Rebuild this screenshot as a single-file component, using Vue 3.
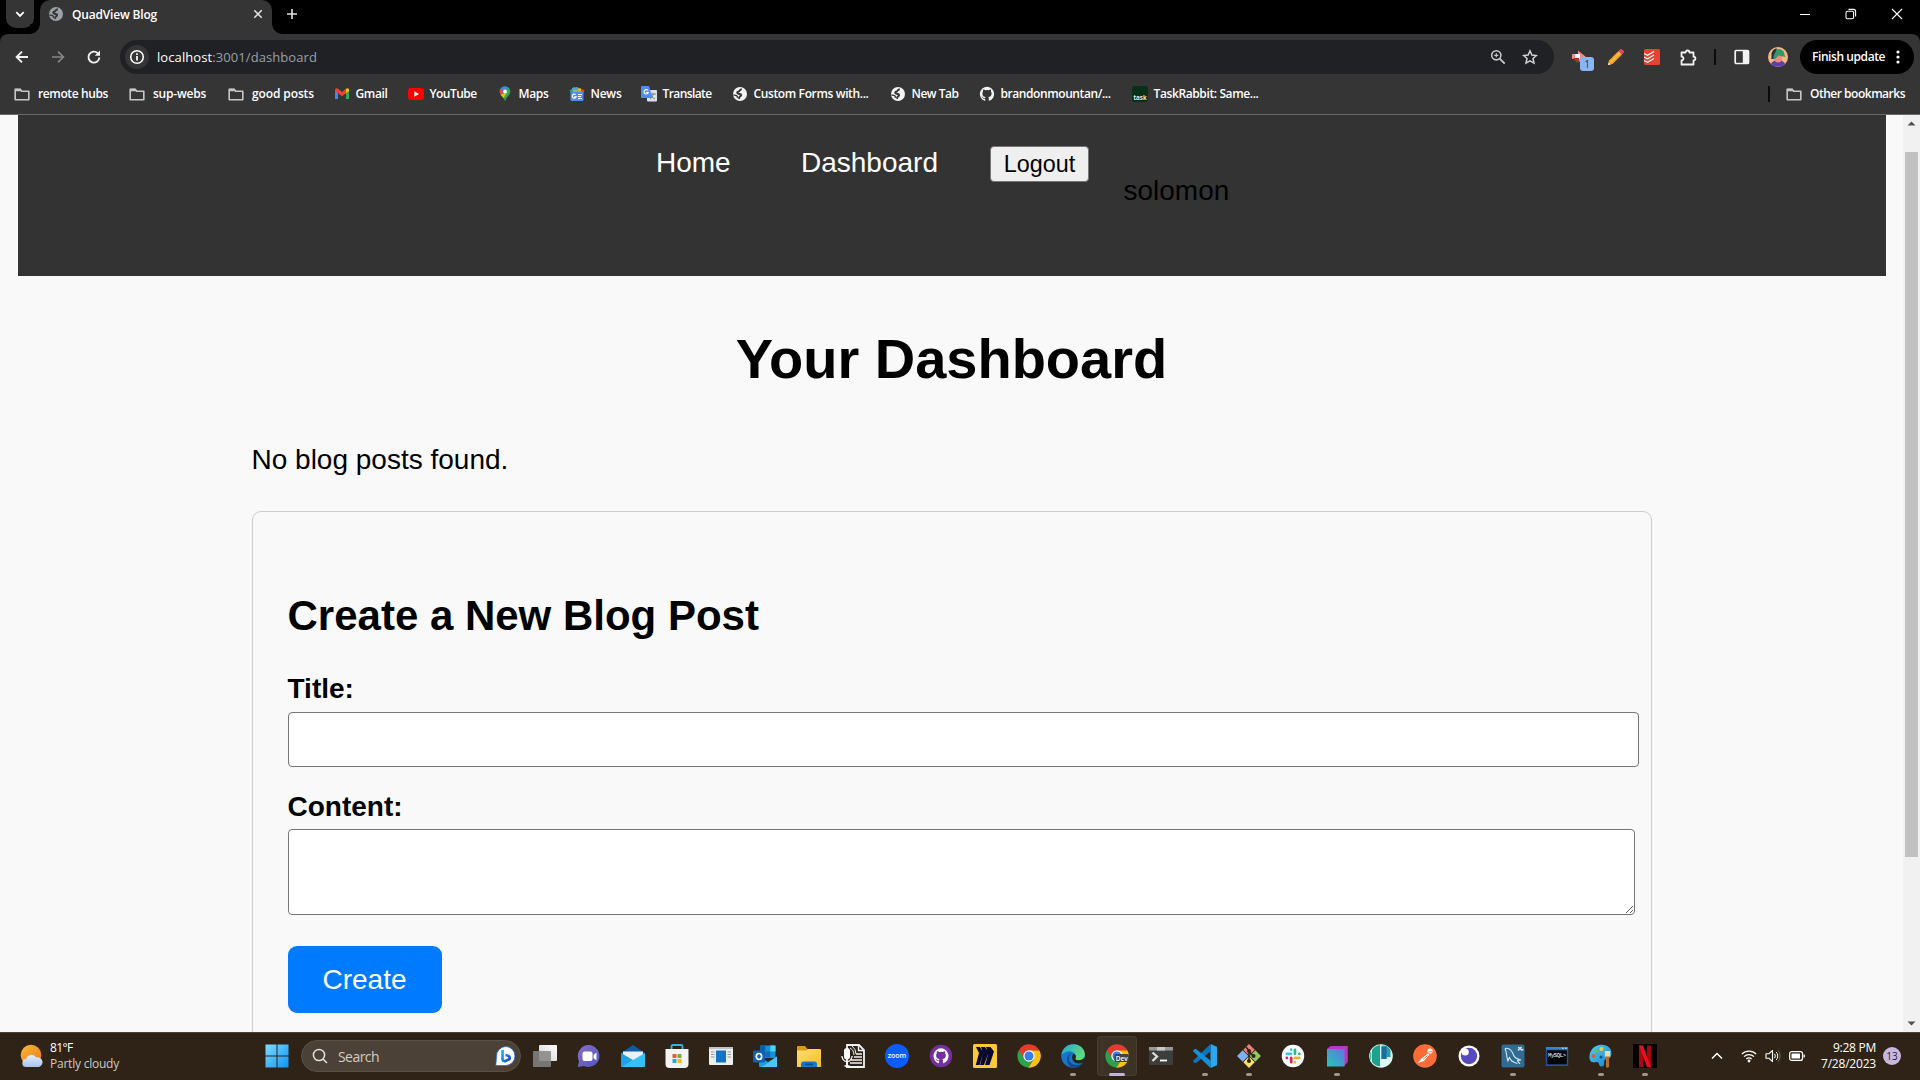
<script setup>
const FOLDER = '<path d="M1.2 12.6V3.2h5l1.5 2h7.1v8.6H1.2z" fill="none" stroke="#c7c7c7" stroke-width="1.6" stroke-linejoin="round"/><path d="M1 2.8h5.4l1.5 2.4H1z" fill="#c7c7c7"/>'
const globe = (color, ink) =>
  `<circle cx="8" cy="8" r="7" fill="${color}"/><path d="M9.800 3.200C7.500 3.200 8 5.300 6 5.800 4.600 6.300 5.200 8 7.600 8c2.200 0 1.700 1.800.6 2.300-.9.300-.8 1.200-1.500 2.400" fill="none" stroke="${ink}" stroke-width="2"/><path d="M1.400 8.800l3.200.8q1.300.6.500 2.400" fill="none" stroke="${ink}" stroke-width="1.300"/>`
const CAT = 'M8 .8a7.200 7.200 0 0 0-2.300 14c.4.100.5-.2.500-.4v-1.500c-2 .4-2.400-.8-2.400-.8-.3-.8-.8-1-.8-1-.7-.5 0-.5 0-.5.7 0 1.100.8 1.100.8.700 1.100 1.700.8 2.100.6 0-.5.3-.8.500-1-1.600-.2-3.300-.8-3.300-3.600 0-.8.300-1.400.7-1.900 0-.2-.3-.9.1-1.900 0 0 .6-.2 2 .7a7 7 0 0 1 3.600 0c1.400-.9 2-.7 2-.7.4 1 .1 1.700.1 1.900.4.500.7 1.100.7 1.900 0 2.800-1.700 3.400-3.300 3.600.3.200.5.700.5 1.300v2.100c0 .2.100.5.500.4A7.200 7.200 0 0 0 8 .8z'

const bookmarks = [
  { label: 'remote hubs', text: 70, step: 115, folder: true, icon: FOLDER },
  { label: 'sup-webs', text: 53, step: 99, folder: true, icon: FOLDER },
  { label: 'good posts', text: 62, step: 106, folder: true, icon: FOLDER },
  { label: 'Gmail', text: 32, step: 74, icon: '<path d="M1 3.500V13h3V7z" fill="#4285f4"/><path d="M15 3.500V13h-3V7z" fill="#34a853"/><path d="M1 3.800C1 2 3 1.800 4 2.800l4 3.200 4-3.200v4.400l-4 3-4-3L1 5z" fill="#ea4335"/><path d="M12 2.800c1-1 3-.8 3 1L15 5l-3 2.200z" fill="#fbbc04"/>' },
  { label: 'YouTube', text: 47, step: 89, icon: '<rect y="2" width="16" height="12" rx="3" fill="#f00"/><path d="M6.300 5.300 11 8l-4.700 2.700z" fill="#fff"/>' },
  { label: 'Maps', text: 30, step: 72, icon: '<path d="M8 .5a5 5 0 0 0-5.300 5c0 4 4 5 5.300 10 1.300-5 5.300-6 5.300-10A5 5 0 0 0 8 .5z" fill="#34a853"/><path d="M3.500 2.800A5.300 5.300 0 0 1 11 1.400L6 8z" fill="#4285f4"/><path d="m3.500 2.800 3 2.500-3 3.500C2.400 6.500 2.300 4.500 3.500 2.800z" fill="#ea4335"/><path d="M3.500 8.800 9.500 7 6.600 12z" fill="#fbbc04"/><circle cx="8" cy="5.500" r="1.900" fill="#fff"/>' },
  { label: 'News', text: 31, step: 72, icon: '<path d="m.5 4 6-1.500 1 5H2z" fill="#34a853"/><path d="m9 2.500 6.500 1.500L14 8H8z" fill="#ea4335"/><path d="m4 1.500 8 1V6H4z" fill="#fbbc04"/><path d="m3 2 6-1 .5 3.500H3z" fill="#4aa8d8"/><rect x="1.500" y="5.500" width="13" height="9.500" rx="1" fill="#4f8df5"/><path d="M6.700 8.700a2 2 0 1 0 .5 2H5.200M9 8.500h4M9 10.500h3M9 12.500h4" stroke="#fff" fill="none" stroke-width="1.100"/>' },
  { label: 'Translate', text: 49, step: 91, icon: '<rect x="6" y="4" width="10" height="11.500" rx="1" fill="#dfe1e5"/><path d="M9 8h6M12 7v1c0 2-1 4-3 5M10.500 9c.5 2 2 3.500 3.500 4" stroke="#7a8290" fill="none"/><path d="M1 0h7l3.500 12H1a1 1 0 0 1-1-1V1a1 1 0 0 1 1-1z" fill="#4f8df5"/><path d="M7 4.500A2.200 2.200 0 1 0 7.300 6.500H5" stroke="#fff" fill="none" stroke-width="1.100"/>' },
  { label: 'Custom Forms with...', text: 115, step: 158, icon: globe('#f4f4f4', '#353535') },
  { label: 'New Tab', text: 47, step: 89, icon: globe('#f4f4f4', '#353535') },
  { label: 'brandonmountan/...', text: 110, step: 153, icon: `<path d="${CAT}" fill="#f4f4f4"/>` },
  { label: 'TaskRabbit: Same...', text: 105, step: 130, icon: '<rect width="16" height="16" rx="2" fill="#0b3019"/><text x="8" y="13.500" text-anchor="middle" fill="#fff" font-size="6.500" font-family="Open Sans, sans-serif" font-weight="600">task</text>' },
]

const CHROME = '<path d="M12 12 2 6.100a11.700 11.700 0 0 0 9.300 17.600L17 15z" fill="#2ba24c"/><path d="M12 6.300h10.300A11.700 11.700 0 0 1 11.300 23.700L17 14.800z" fill="#fbc116"/><path d="M2 6.100A11.700 11.700 0 0 1 22.300 6.300H12L7 14.800z" fill="#e33b2e"/><circle cx="12" cy="12" r="5.700" fill="#fff"/><circle cx="12" cy="12" r="4.500" fill="#347df0"/>'

const apps = [
  { name: 'Task view', icon: '<rect x="6" y="1" width="18" height="16" rx="1" fill="url(#gWhite)"/><rect x="0" y="7" width="18" height="16" rx="1" fill="#858585" opacity=".85"/>' },
  { name: 'Chat', icon: '<path d="M12.500 1A11 11 0 1 1 7 22L.8 23 2 17A11 11 0 0 1 12.500 1z" fill="url(#gChat)"/><rect x="5.500" y="7.500" width="10" height="9.500" rx="2" fill="#fff"/><path d="m16.500 11 3-2.500v8l-3-2.500z" fill="#fff"/>' },
  { name: 'Mail', icon: '<path d="m0 9 12-8 12 8v4H0z" fill="#105aa8"/><path d="M2 7.500h20v9H2z" fill="#e9f2fa"/><path d="m0 9 24 14H1a1 1 0 0 1-1-1z" fill="#1ea0e6"/><path d="M24 9 0 23h23a1 1 0 0 0 1-1z" fill="#35c0f5"/>' },
  { name: 'Store', icon: '<path d="M6.500 6V2.500Q6.500 1 8 1h8q1.500 0 1.500 1.500V6" fill="none" stroke="#31b2e8" stroke-width="1.900"/><path d="M.5 5h23v15a4 4 0 0 1-4 4h-15a4 4 0 0 1-4-4z" fill="#f3f3f3"/><path d="M7.500 10h4v4h-4z" fill="#e85c2c"/><path d="M12.500 10h4v4h-4z" fill="#70b23a"/><path d="M7.500 15h4v4h-4z" fill="#2aa3df"/><path d="M12.500 15h4v4h-4z" fill="#f6b626"/>' },
  { name: 'News reader', icon: '<rect y="3" width="24" height="18" rx="1" fill="#eee"/><path d="M0 3h24v2H0z" fill="#bfc4c8"/><rect x="7" y="6.500" width="10" height="12" fill="#1273c9"/><path d="M2 8h3.500M2 10.500h3.500M2 13h3.500M18.500 8H22M18.500 10.500H22M18.500 13H22" stroke="#999"/>' },
  { name: 'Outlook', icon: '<path d="M7 1.500h15.500V14H7z" fill="#1490df"/><path d="M7 1.500h5.200v6H7z" fill="#0f5ea8"/><path d="M17.300 1.500h5.200v6h-5.200z" fill="#4fd0ff"/><path d="M12.200 7.500h5v6h-5z" fill="#0a6cc0"/><path d="M6 12.500 15 18l9-5.500V23H7a1 1 0 0 1-1-1z" fill="#1b9de2"/><path d="M24 12.500 9 23h15z" fill="#50c5f5"/><rect y="6.500" width="12" height="12" rx="1.200" fill="#0f5fb4"/><ellipse cx="6" cy="12.500" rx="2.700" ry="3" fill="none" stroke="#fff" stroke-width="1.700"/>' },
  { name: 'Explorer', icon: '<path d="M0 3a1 1 0 0 1 1-1h7l2.500 3H23v5H0z" fill="#dc9a12"/><path d="M0 6.500h9l2-1.500h12a1 1 0 0 1 1 1V23H0z" fill="url(#gFolder)"/><path d="M4 23v-3q0-2.500 2.500-2.500h11Q20 17.500 20 20v3z" fill="#1679c7"/><rect x="8" y="19.500" width="8" height="1.800" rx=".9" fill="#0b4a86"/>' },
  { name: 'Dictation', icon: '<path d="M6 1h12l5 5v17H6z" fill="#2b2318" stroke="#f1f1f1" stroke-width="1.800"/><path d="M17.500 1v5.500H23M15 10h6M13 13h8M10 16h11M9 19h12" stroke="#f1f1f1" stroke-width="1.400" fill="none"/><path d="M9 4a8 8 0 0 1 4 7M11 2a10 10 0 0 1 4 8" stroke="#f1f1f1" fill="none"/><rect x="3" y="4" width="6" height="11.500" rx="3" fill="#fff"/><path d="M.8 12q1 5.500 5.200 5.500t5.200-5.500M6 17.500V22M3.500 22h5" stroke="#fff" stroke-width="1.300" fill="none"/>' },
  { name: 'Zoom', icon: '<circle cx="12" cy="12" r="12" fill="#0b5cff"/><text x="12" y="14.200" text-anchor="middle" font-size="7" font-weight="600" font-family="Open Sans, sans-serif" fill="#fff">zoom</text>' },
  { name: 'GitHub Desktop', icon: `<circle cx="12" cy="12" r="11.200" fill="#762fa0"/><g transform="translate(3.500 3.500) scale(1.060)"><path d="${CAT}" fill="#fff"/></g>` },
  { name: 'Miro', icon: '<rect width="24" height="24" rx="1.500" fill="#fcca37"/><path d="M3 3h4l2.200 4L8 3h4l2.200 3.600L13 3h4.500L21 7.500 16.500 21H12l3.500-12L11 21H7l3-11.500L6.500 21H2.800L6 9z" fill="#080833"/>' },
  { name: 'Chrome', icon: CHROME },
  { name: 'Edge', mark: 'dot', icon: '<circle cx="12" cy="12" r="11.800" fill="#1477ca"/><path d="M.5 10.500C2 3 8 0 13 .2 20 .6 24.500 6 23.800 11.300c-.5 3.700-4 5.300-7.300 4.900-2.300-.3-2.700-1.200-1.700-2.700C16 9 9 5.500 4 8.300 2 9.300 1 10.600.5 10.500z" fill="url(#gEdge)"/><path d="M10 9.500C7 12 7 18 12 20.300c3.400 1.500 7.500.6 10.300-2.100C18 26 9.500 24.500 7 20c-2.400-4.200-1-9.500 3-10.500z" fill="#114b91"/><path d="M14.800 13.500c-1 1.500-.6 2.400 1.700 2.700 3.300.4 6-.8 7-3 .5 2-.1 4-1.200 5-3.500 2.300-8.300 1.500-10.300-1.700-1.500-2.500-.7-5.500.4-6.700 1.600.3 3 2 2.400 3.700z" fill="#2b2318"/>' },
  { name: 'Chrome Dev', mark: 'active', icon: CHROME + '<rect x="9.500" y="10" width="14.500" height="8" rx="1.500" fill="#434343"/><text x="16.800" y="16.500" text-anchor="middle" font-size="6.500" font-weight="600" font-family="Open Sans, sans-serif" fill="#fff">Dev</text>' },
  { name: 'Terminal', icon: '<rect y="3" width="24" height="18" rx="1" fill="#3d3d3d"/><path d="M0 3h24v3.500H0z" fill="#999"/><path d="M8 3h8v3.500H8z" fill="#c9c9c9"/><path d="m3.500 8.500 4.500 4-4.500 4.500" stroke="#ddd" stroke-width="2.300" fill="none"/><path d="M11 16.500h7" stroke="#fff" stroke-width="1.800"/>' },
  { name: 'VS Code', mark: 'dot', icon: '<path d="M17.500 0 24 2.800v18.400L17.500 24z" fill="#29a8ee"/><path d="M17.500 0 18 7 3 19l-1.300.1L.2 17.600q-.4-.5.1-1z" fill="#0b75bd"/><path d="m17.500 24 .5-7L3 5l-1.300-.1L.2 6.400q-.4.500.1 1z" fill="#158fd6"/>' },
  { name: 'Git Bash', mark: 'dot', icon: '<path d="m12 0 5.700 5.700L12 11.400 6.300 5.700z" fill="#f37e72"/><path d="m5.700 6.300 5.700 5.700-5.700 5.700L0 12z" fill="#7fb0ef"/><path d="m18.300 6.300L24 12l-5.700 5.700-5.700-5.700z" fill="#8fca60"/><path d="m12 12.600 5.700 5.700L12 24l-5.700-5.700z" fill="#fbdf6c"/><path d="m9 3 3 3.500V17M12 7.500l4.500 4.500" stroke="#2d241a" stroke-width="1.500" fill="none"/><circle cx="12" cy="7" r="2" fill="#2d241a"/><circle cx="12" cy="17" r="2" fill="#2d241a"/><circle cx="16.500" cy="12" r="2" fill="#2d241a"/>' },
  { name: 'Slack', icon: '<circle cx="12" cy="12" r="11.200" fill="#fff"/><g stroke-width="2.700" stroke-linecap="round"><path d="M10.200 9.800H5.800M10.200 5.600v.2" stroke="#36c5f0"/><path d="M14 5.800v4M18.300 9.800h.1" stroke="#2eb67d"/><path d="M14 13.900h4.300M14 18.200v.1" stroke="#ecb22e"/><path d="M10.200 13.900v4.300M5.800 13.900h.1" stroke="#e01e5a"/></g>' },
  { name: 'Cube', mark: 'dot', icon: '<path d="M2 5 6 2h16.500v16L19 22V5z" fill="#e8348f"/><path d="M2 5h17.500v16L22.500 18V2H6z" fill="#b837c7"/><rect x="2" y="5" width="17.500" height="17.500" fill="url(#gCube)"/>' },
  { name: 'Panels', icon: '<circle cx="12" cy="12" r="11.800" fill="#dcf6f5"/><path d="M3 6q3-4.500 8-5v21.500q-5-.4-8-4.500z" fill="#1da38d"/><path d="M12.500 1.500h5l4 4.500v7h-4v2h-5z" fill="#2a9dad"/><path d="M12.500 3h5v12h-5z" fill="#1b6d9c"/><path d="M1.200 8h1v8h-1z" fill="#26b29b"/>' },
  { name: 'Postman', icon: '<circle cx="12" cy="12" r="11.800" fill="#ff6c37"/><path d="m4.500 19 3.800-4.200 6.700-5.500 1.500 1.500-6 6.500z" fill="#fff"/><circle cx="17" cy="7" r="2.600" fill="#fff"/><path d="m15.500 8.200 3.200-.7" stroke="#ff6c37" stroke-width=".9"/><path d="m10 15.500 4.500-4" stroke="#ff6c37" stroke-width=".8"/>' },
  { name: 'Insomnia', icon: '<circle cx="12" cy="12" r="10.500" fill="#fff"/><circle cx="12" cy="12" r="8.200" fill="#5849be"/><circle cx="8.200" cy="8" r="3.600" fill="#fff"/>' },
  { name: 'Workbench', mark: 'dot', icon: '<rect x=".5" y=".5" width="23" height="23" rx="2" fill="#2f6b92"/><path d="M4 4.500c4-1 7 2.500 8.500 6.500 1 3 3.500 4 7.500 5-2 0-3 .2-3.500.7L19 20M4 4.500c1 2 1 3 1.500 5.500s.5 5 1.500 7.500c0-2 .5-3 1.500-4 1 3 4 5 8 6" fill="none" stroke="#d8e8f2" stroke-width="1.100"/><path d="m17 6.500 3.500-3.500M17 3.500l2 .5 1.500 2 2-.5" stroke="#d8e8f2" stroke-width="1.400" fill="none"/>' },
  { name: 'MySQL', icon: '<rect x=".8" y="3" width="22.400" height="19" fill="#27529b"/><path d="M1 3h22v2.500H1z" fill="#3c82d4"/><path d="M17 4.200h1.500M20 4.200h1.500" stroke="#fff"/><path d="M2.200 6.300h19.600v14H2.200z" fill="#050505"/><text x="12" y="13.200" text-anchor="middle" font-size="5.600" font-family="Liberation Mono, monospace" fill="#fff" textLength="18">MySQL&gt;</text>' },
  { name: 'Paint', mark: 'dot', icon: '<path d="M12.500.8C19 .8 23 5 22.500 10c-.4 4-3 5-4.500 5-2.500 0-3 2-2.800 4 .3 2.500-1.200 4-3.200 3.500-3-.6-1-5-4.500-4.500C4.500 19 .8 18.500.5 14 0 6 6 .8 12.500.8z" fill="url(#gPaint)"/><circle cx="12.500" cy="5" r="2" fill="#f4cb33"/><circle cx="7.500" cy="7" r="2" fill="#6bbf4b"/><circle cx="4.500" cy="12" r="2" fill="#e35b3a"/><circle cx="12" cy="13" r="1.500" fill="#12558e"/><path d="M17 12h3v11q-1.500 1.500-3 0z" fill="#b86f27"/><path d="M15.800 7h5.400v5.500h-5.400z" fill="#ecd9a8"/>' },
  { name: 'Netflix', mark: 'dot', icon: '<rect width="24" height="24" fill="#050202"/><path d="M6 1.500h4V23l-4 .5z" fill="#a70810"/><path d="M14 1.500h4v22l-4-.5z" fill="#a70810"/><path d="M6 1.500h4l8 22-4-.5z" fill="#e8101c"/>' },
]

// Spreads a label's letters so that it fills the given width in pixels.
const vFit = {
  mounted(el, { value }) {
    const natural = el.getBoundingClientRect().width
    el.style.letterSpacing = `${((value - natural) / el.textContent.length).toFixed(3)}px`
  },
}
</script>

<template>
  <div class="screen">
    <svg class="defs" width="0" height="0">
      <defs>
        <linearGradient id="gWhite" x1="0" y1="1" x2="1" y2="0"><stop offset="0" stop-color="#cfcfcf" /><stop offset="1" stop-color="#fff" /></linearGradient>
        <linearGradient id="gChat" x1="0" y1="0" x2="1" y2="1"><stop offset="0" stop-color="#8a6fc8" /><stop offset="1" stop-color="#4d55bd" /></linearGradient>
        <linearGradient id="gFolder" x1="0" y1="0" x2="1" y2="1"><stop offset="0" stop-color="#ffdd70" /><stop offset="1" stop-color="#f7bd2b" /></linearGradient>
        <linearGradient id="gEdge" x1="0" y1="0" x2="1" y2=".5"><stop offset="0" stop-color="#25a4e0" /><stop offset="1" stop-color="#5fdd74" /></linearGradient>
        <linearGradient id="gCube" x1="1" y1="0" x2="0" y2="1"><stop offset="0" stop-color="#5a78e0" /><stop offset="1" stop-color="#27c6b4" /></linearGradient>
        <linearGradient id="gPaint" x1="0" y1="0" x2="1" y2="1"><stop offset="0" stop-color="#53cdf5" /><stop offset="1" stop-color="#1681cf" /></linearGradient>
        <linearGradient id="gWin" x1="0" y1="0" x2="1" y2="1"><stop offset="0" stop-color="#7fdcff" /><stop offset="1" stop-color="#0b93f5" /></linearGradient>
        <linearGradient id="gSun" x1="0" y1="0" x2="1" y2="1"><stop offset="0" stop-color="#f9b934" /><stop offset="1" stop-color="#ea7a1d" /></linearGradient>
        <linearGradient id="gCloud" x1="0" y1="0" x2="0" y2="1"><stop offset="0" stop-color="#e6effd" /><stop offset="1" stop-color="#a9c2ee" /></linearGradient>
        <linearGradient id="gBing" x1="0" y1="0" x2="1" y2="1"><stop offset="0" stop-color="#1bb5ea" /><stop offset="1" stop-color="#1746c4" /></linearGradient>
      </defs>
    </svg>

    <header class="tabs">
      <button class="tab-search" aria-label="Search tabs">
        <svg width="12" height="12" viewBox="0 0 12 12"><path d="m2.300 4.200 3.700 3.700 3.700-3.700" fill="none" stroke="#fff" stroke-width="1.800" /></svg>
      </button>
      <div class="tab">
        <svg width="16" height="16" viewBox="0 0 16 16" v-html="globe('#9aa0a6', '#353535')"></svg>
        <span v-fit="85" class="tab-title">QuadView Blog</span>
        <svg class="tab-close" width="10" height="10" viewBox="0 0 10 10"><path d="m1.300 1.300 7.400 7.400M8.700 1.300 1.300 8.700" stroke="#e6e6e6" stroke-width="1.500" /></svg>
      </div>
      <svg class="new-tab" width="12" height="12" viewBox="0 0 12 12"><path d="M6 1v10M1 6h10" stroke="#e6e6e6" stroke-width="1.600" /></svg>
      <div class="window-controls">
        <svg width="12" height="12" viewBox="0 0 12 12"><path d="M1 6.500h10" stroke="#fff" /></svg>
        <svg width="12" height="12" viewBox="0 0 12 12"><rect x="1" y="3.200" width="7.600" height="7.600" rx="1.500" fill="none" stroke="#fff" stroke-width="1.100" /><path d="M3.500 1.400H8.500Q10.600 1.400 10.600 3.500V8.500" fill="none" stroke="#fff" stroke-width="1.100" /></svg>
        <svg width="12" height="12" viewBox="0 0 12 12"><path d="m1 1 10 10M11 1 1 11" stroke="#fff" stroke-width="1.100" /></svg>
      </div>
    </header>

    <div class="toolbar">
      <svg class="nav-icon" width="16" height="16" viewBox="0 0 16 16"><path d="M14 8H2.800M8 2.600 2.600 8 8 13.400" fill="none" stroke="#f2f2f2" stroke-width="1.900" /></svg>
      <svg class="nav-icon" width="16" height="16" viewBox="0 0 16 16"><path d="M2 8h11.200M8 2.600 13.400 8 8 13.400" fill="none" stroke="#868686" stroke-width="1.700" /></svg>
      <svg class="nav-icon" width="16" height="16" viewBox="0 0 16 16"><path d="M13.400 8.500A5.500 5.500 0 1 1 11.900 4.300L13 5.400" fill="none" stroke="#f2f2f2" stroke-width="1.900" /><path d="M14 1.500v5.200H8.800z" fill="#f2f2f2" /></svg>
      <div class="omnibox">
        <span class="site-info"><svg width="16" height="16" viewBox="0 0 16 16"><circle cx="8" cy="8" r="6.300" fill="none" stroke="#fff" stroke-width="1.600" /><path d="M8 7v4.500M8 4.200v1.700" stroke="#fff" stroke-width="1.700" /></svg></span>
        <span v-fit="160" class="url"><b>localhost</b>:3001/dashboard</span>
        <span class="grow"></span>
        <svg class="magnify" width="16" height="16" viewBox="0 0 16 16"><circle cx="6.300" cy="6.300" r="4.600" fill="none" stroke="#c4c7ca" stroke-width="1.600" /><path d="m9.700 9.700 5 5" stroke="#c4c7ca" stroke-width="1.900" /><path d="M6.300 4.300v4M4.300 6.300h4" stroke="#c4c7ca" stroke-width="1.200" /></svg>
        <svg width="16" height="16" viewBox="0 0 16 16"><path d="m8 1.800 1.900 4.200 4.500.5-3.400 3 1 4.600L8 11.800l-4 2.300 1-4.600-3.400-3L6.100 6z" fill="none" stroke="#d0d2d4" stroke-width="1.500" /></svg>
      </div>
      <div class="extensions">
        <div class="ext-badge">
          <svg width="18" height="16" viewBox="0 0 18 16"><path d="M1 5h6V1.500L15 8l-8 5.500V10H1z" fill="#ee8c88" /><path d="M4 5h5v5H4z" fill="#fff" /><path d="M2 9h6v4H5z" fill="#b0302c" /></svg>
          <span class="count">1</span>
        </div>
        <svg class="pencil" width="16" height="16" viewBox="0 0 16 16"><path d="m0 16 1-4.500L10.500 2 14 5.500 4.500 15z" fill="#f9a21c" /><path d="M2.800 13.300 12.300 3.800" stroke="#ffc043" stroke-width="1.500" /><path d="m10.500 2 1.500-1.500a1.500 1.500 0 0 1 2.200 0l1.300 1.300a1.500 1.500 0 0 1 0 2.200L14 5.500z" fill="#e8416a" /><path d="m0 16 .6-2.600 2 2z" fill="#fff3d6" /></svg>
        <svg class="todo" width="16" height="16" viewBox="0 0 16 16"><rect width="16" height="16" rx="1.500" fill="#e44332" /><path d="M0 4.500l3.500 1.800L10 2.500M0 8l3.500 1.800L10 6M0 11.500l3.500 1.800L10 9.500" fill="none" stroke="#fff" stroke-width="1.200" /></svg>
        <svg class="puzzle" width="17" height="17" viewBox="0 0 17 17"><path d="M1.500 3.500h4a2 2 0 0 1 4 0h4v4.200a1.900 1.900 0 0 1 0 3.800v4H1.500v-4a2 2 0 0 0 0-4z" fill="none" stroke="#f2f2f2" stroke-width="1.800" stroke-linejoin="round" /></svg>
        <i class="divider"></i>
        <svg class="side" width="16" height="16" viewBox="0 0 16 16"><rect x="1.200" y="1.500" width="13.300" height="13" rx="1" fill="none" stroke="#f2f2f2" stroke-width="1.700" /><path d="M8.800 2h5.500v12H8.800z" fill="#f2f2f2" /></svg>
        <svg class="side" width="20" height="20" viewBox="0 0 20 20"><circle cx="10" cy="10" r="10" fill="#f5b784" /><path d="M3 17q2-4 7-4t7 4a10 10 0 0 1-14 0z" fill="#5b3fb0" /><path d="M6 8h8v4.500q-1 3-4 3t-4-3.500z" fill="#f08a7c" /><path d="M4.500 9q0-7 6-7 6 .5 6 6l1 2-7-1.500-3.500 3.500H5z" fill="#2c9b68" /><path d="M3.500 6.500Q5 1.500 9 1.500L5.500 9v3h-2z" fill="#24303c" /></svg>
      </div>
      <button class="update"><span v-fit="73">Finish update</span><svg width="4" height="14" viewBox="0 0 4 14"><circle cx="2" cy="2" r="1.600" fill="#fff" /><circle cx="2" cy="7" r="1.600" fill="#fff" /><circle cx="2" cy="12" r="1.600" fill="#fff" /></svg></button>
    </div>

    <div class="bookmarks">
      <div v-for="b in bookmarks" :key="b.label" class="bookmark" :class="{ folder: b.folder }" :style="{ width: b.step + 'px' }">
        <svg width="16" height="16" viewBox="0 0 16 16" v-html="b.icon"></svg>
        <span v-fit="b.text">{{ b.label }}</span>
      </div>
      <i class="divider"></i>
      <div class="bookmark folder">
        <svg width="16" height="16" viewBox="0 0 16 16" v-html="FOLDER"></svg>
        <span v-fit="95">Other bookmarks</span>
      </div>
    </div>

    <div class="viewport">
      <main class="page">
        <nav class="site-nav">
          <a class="home">Home</a>
          <a class="dash">Dashboard</a>
          <button class="logout">Logout</button>
          <span class="user">solomon</span>
        </nav>
        <h1>Your Dashboard</h1>
        <div class="container">
          <p>No blog posts found.</p>
          <form class="post-form" @submit.prevent>
            <h2>Create a New Blog Post</h2>
            <label for="title">Title:</label>
            <input id="title" type="text" />
            <label for="content" class="second">Content:</label>
            <textarea id="content"></textarea>
            <button class="create">Create</button>
          </form>
        </div>
      </main>
      <div class="scrollbar">
        <svg width="17" height="17" viewBox="0 0 17 17"><path d="m4.500 10.500 4-4 4 4z" fill="#505050" /></svg>
        <i class="thumb"></i>
        <span class="grow"></span>
        <svg width="17" height="17" viewBox="0 0 17 17"><path d="m4.500 6.500 4 4 4-4z" fill="#505050" /></svg>
      </div>
    </div>

    <footer class="taskbar">
      <div class="weather">
        <svg width="24" height="24" viewBox="0 0 24 24"><circle cx="11" cy="11" r="10.300" fill="url(#gSun)" /><path d="M6.500 23a4 4 0 0 1-.3-8 5.500 5.500 0 0 1 10-1.500 4.800 4.800 0 0 1 2.800 9.500z" fill="url(#gCloud)" /></svg>
        <div class="lines"><span v-fit="22.5" class="bright">81°F</span><span v-fit="69">Partly cloudy</span></div>
      </div>
      <svg class="start" width="24" height="24" viewBox="0 0 24 24"><path d="M.5.500h11v11H.5zM12.500.5h11v11h-11zM.5 12.500h11v11H.5zM12.500 12.500h11v11h-11z" fill="url(#gWin)" /></svg>
      <div class="search">
        <svg width="16" height="16" viewBox="0 0 16 16"><circle cx="7" cy="7" r="5.600" fill="none" stroke="#e4e0dc" stroke-width="1.500" /><path d="m11 11 4 4" stroke="#e4e0dc" stroke-width="1.600" /></svg>
        <span v-fit="41">Search</span>
        <span class="grow"></span>
        <svg width="20" height="20" viewBox="0 0 20 20"><path d="M10.500.5a9.500 9.500 0 1 1 0 19H.8l.7-9A9.500 9.500 0 0 1 10.500.5z" fill="#fff" stroke="#1b6fd0" stroke-width=".8" /><path d="M7.500 4v9.500q.5 2 2.700 1.600L14.500 13q1.200-3-4-4" fill="none" stroke="url(#gBing)" stroke-width="2.600" stroke-linejoin="round" /></svg>
      </div>
      <div class="apps">
        <div v-for="app in apps" :key="app.name" class="app" :class="app.mark">
          <svg width="24" height="24" viewBox="0 0 24 24" v-html="app.icon"></svg>
        </div>
      </div>
      <span class="grow"></span>
      <div class="tray">
        <svg class="chevron" width="12" height="12" viewBox="0 0 12 12"><path d="m1 8.500 5-5 5 5" fill="none" stroke="#fff" stroke-width="1.500" /></svg>
        <svg width="16" height="14" viewBox="0 0 16 14"><path d="M.8 5.200a10.200 10.200 0 0 1 14.400 0M3 7.700a7 7 0 0 1 10 0M5.300 10a3.800 3.800 0 0 1 5.400 0" fill="none" stroke="#fff" stroke-width="1.200" /><circle cx="8" cy="12" r="1.400" fill="#fff" /></svg>
        <svg class="speaker" width="16" height="14" viewBox="0 0 16 14"><path d="M1 4.800h2.700L7.500 1.500v11L3.700 9.200H1z" fill="none" stroke="#fff" stroke-width="1.100" stroke-linejoin="round" /><path d="M9.500 4.800a3.500 3.500 0 0 1 0 4.400M11.200 3a6 6 0 0 1 0 8" fill="none" stroke="#fff" /><path d="M13 1.200a9 9 0 0 1 0 11.600" fill="none" stroke="#70675c" /></svg>
        <svg class="battery" width="16" height="12" viewBox="0 0 16 12"><rect x=".7" y="1.600" width="12.800" height="8.800" rx="2" fill="none" stroke="#fff" stroke-width="1.200" /><rect x="2.500" y="3.400" width="8.500" height="5.200" rx=".6" fill="#fff" /><path d="M15.200 4.500v3" stroke="#fff" stroke-width="1.300" /></svg>
        <div class="clock"><span v-fit="43">9:28 PM</span><span v-fit="55">7/28/2023</span></div>
        <span class="notice">13</span>
      </div>
    </footer>
  </div>
</template>

<style>
body { margin: 0; overflow: hidden; }
</style>

<style scoped>
.screen { width: 1920px; height: 1080px; display: flex; flex-direction: column; overflow: hidden; background: #000; font-family: "Open Sans", "Noto Sans", sans-serif; font-size: 12px; color: #fff; }
.screen svg { flex: none; display: block; }
.screen span { white-space: nowrap; }
.defs { position: absolute; }
.grow { flex: 1; }
button { margin: 0; font-family: inherit; }

.tabs { height: 34px; flex: none; display: flex; background: #000; align-items: flex-start; }
.tab-search { width: 28px; height: 28px; margin: 0 6px; border: 0; border-radius: 0 0 10px 10px; background: #353535; display: flex; align-items: center; justify-content: center; padding: 0; }
.tab { position: relative; width: 232px; height: 34px; box-sizing: border-box; padding: 0 9px 6px 8px; border-radius: 10px 10px 0 0; background: #353535; display: flex; align-items: center; }
.tab::before, .tab::after { content: ""; position: absolute; bottom: 0; width: 10px; height: 10px; }
.tab::before { left: -10px; background: radial-gradient(circle at 0 0, #000 9.500px, #353535 10px); }
.tab::after { right: -10px; background: radial-gradient(circle at 100% 0, #000 9.500px, #353535 10px); }
.tab-title { margin: 2px 0 0 8px; font-weight: 600; font-size: 12px; line-height: 16px; }
.tab-close { margin-left: auto; }
.new-tab { margin: 8px 0 0 14px; }
.window-controls { margin-left: auto; display: flex; gap: 34px; padding: 8px 17px 0 0; }

.toolbar { height: 46px; flex: none; background: #353535; border-radius: 8px 8px 0 0; display: flex; align-items: center; box-sizing: border-box; padding: 0 6px 0 14px; }
.nav-icon { margin-right: 20px; }
.omnibox { width: 1434px; height: 34px; margin-left: -2px; border-radius: 17px; background: #202124; display: flex; align-items: center; box-sizing: border-box; padding: 0 16px 0 5px; }
.site-info { width: 24px; height: 24px; border-radius: 50%; background: #353535; display: flex; align-items: center; justify-content: center; }
.url { margin-left: 8px; font-size: 13px; color: #9aa0a6; }
.url b { font-weight: 400; color: #fff; }
.magnify { margin-right: 16px; }
.extensions { flex: 1; display: flex; align-items: center; padding-left: 17px; }
.ext-badge { position: relative; }
.pencil { margin-left: 19px; }
.todo, .puzzle { margin-left: 20px; }
.extensions .divider { margin-left: 17px; }
.side { margin-left: 18px; }
.count { position: absolute; left: 9px; top: 8px; width: 14px; height: 14px; border-radius: 3px; background: #8ab4f8; color: #333; font-size: 10px; line-height: 14px; text-align: center; }
.divider { width: 2px; height: 16px; background: #0b0b0b; }
.update { width: 114px; height: 34px; border: 0; border-radius: 17px; background: #000; color: #fff; font-size: 12px; font-weight: 600; line-height: 16px; padding: 0 14px 0 12px; display: flex; align-items: center; justify-content: space-between; }

.bookmarks { height: 34px; flex: none; background: #353535; border-bottom: 1px solid #6a6a6a; display: flex; align-items: center; padding: 0 15px 0 14px; font-weight: 600; }
.bookmark { display: flex; align-items: center; gap: 5.500px; height: 28px; line-height: 16px; margin-bottom: 6px; }
.bookmark span { margin-bottom: 1px; }
.bookmark.folder { gap: 8px; }
.bookmarks .divider { margin: 0 16px 6px auto; }

.viewport { height: 917px; flex: none; display: flex; background: #f9f9f9; color: #000; overflow: hidden; font-family: "Liberation Sans", Arial, sans-serif; font-size: 28px; line-height: 32px; }
.page { width: 1903px; height: 917px; overflow: hidden; }
.site-nav { margin: 0 17px 0 18px; height: 161px; background: #333; display: flex; align-items: flex-start; box-sizing: border-box; padding-left: 638px; }
.site-nav a { color: #fff; margin-top: 32px; }
.home { width: 145px; }
.dash { width: 189px; }
.logout { margin-top: 31px; width: 99px; height: 36px; box-sizing: border-box; padding: 0; border: 1px solid #767676; border-radius: 4px; background: #efefef; color: #000; font-size: 23.330px; line-height: 32px; }
.user { margin: 60px 0 0 34.500px; }
h1 { margin: 51px 0 0; font-size: 56px; line-height: 64px; text-align: center; }
.container { width: 1400px; margin: 53px auto 0; }
.container p { margin: 0; }
.post-form { margin-top: 35px; border: 1px solid #ccc; border-radius: 9px; height: 600px; padding: 80px 35px 0; box-sizing: border-box; display: flex; flex-direction: column; align-items: flex-start; }
h2 { margin: 0; font-size: 42px; line-height: 48px; }
label { font-weight: 700; margin-top: 33px; }
label.second { margin-top: 24px; }
input, textarea { box-sizing: border-box; border: 1px solid #767676; border-radius: 4px; background: #fff; }
input { margin: 7px 0 0; width: 1351px; height: 55px; flex: none; }
textarea { margin: 6px 0 0; width: 1347px; height: 86px; flex: none; resize: both; }
.create { margin-top: 31px; width: 154px; height: 67px; border: 0; border-radius: 9px; background: #007bff; color: #fff; font-size: 28px; }
.scrollbar { width: 17px; background: #f1f1f1; display: flex; flex-direction: column; align-items: center; }
.thumb { width: 13px; height: 705px; margin-top: 20px; background: #c1c1c1; }

.taskbar { height: 48px; flex: none; background: #2e2316; border-top: 1px solid #4b4238; padding-bottom: 1px; box-sizing: border-box; display: flex; align-items: center; }
.weather { display: flex; align-items: center; gap: 6px; width: 245px; padding-left: 20px; color: #cfcac4; }
.lines, .clock { display: flex; flex-direction: column; align-items: flex-start; line-height: 16px; margin-bottom: 1px; }
.bright { color: #fff; }
.search { width: 220px; height: 32px; margin-left: 12px; border-radius: 16px; background: #4b4136; border: 1px solid #5c5146; box-sizing: border-box; display: flex; align-items: center; padding: 0 5px 0 10px; font-size: 14px; color: #d2cdc7; gap: 10px; }
.apps { display: flex; margin-left: 2px; }
.app { position: relative; width: 44px; height: 40px; display: flex; align-items: center; justify-content: center; }
.active { background: #3c3226; box-shadow: inset 0 0 0 1px #473d32; border-radius: 4px; width: 40px; margin: 0 2px; }
.dot::after, .active::after { content: ""; position: absolute; bottom: 0; left: 50%; width: 6px; height: 3px; margin-left: -3px; border-radius: 2px; background: #9c958c; }
.active::after { width: 16px; margin-left: -8px; background: #c6b3dd; }
.tray { display: flex; align-items: center; padding-right: 19px; }
.chevron { margin-right: 18px; }
.speaker { margin-left: 8px; }
.battery { margin-left: 8px; }
.clock { align-items: flex-end; margin-left: 16px; margin-right: 7px; }
.notice { width: 18px; height: 18px; border-radius: 50%; background: #c9b6e0; color: #222; font-size: 10px; line-height: 18px; text-align: center; }
</style>
